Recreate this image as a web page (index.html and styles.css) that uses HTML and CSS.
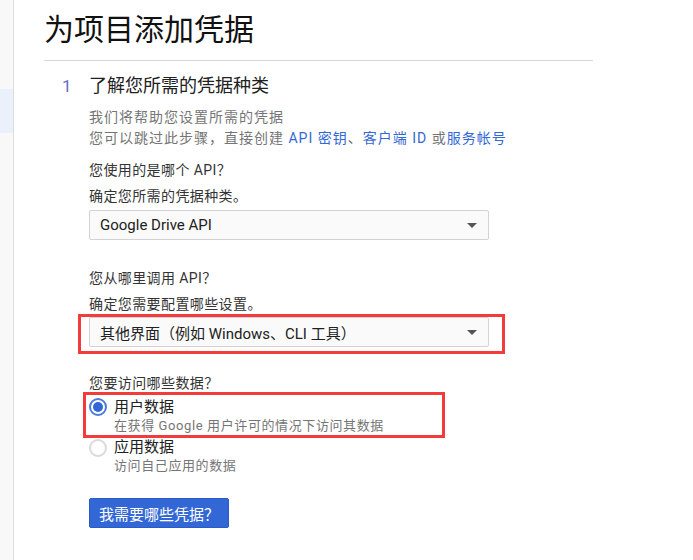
FILE: index.html
```html
<!DOCTYPE html>
<html lang="zh-CN">
<head>
<meta charset="utf-8">
<link rel="stylesheet" href="styles.css">
</head>
<body>
<div class="page">
  <aside class="sidebar">
    <div class="side-item active"></div>
  </aside>
  <main class="main">
    <h1 class="title">为项目添加凭据</h1>
    <div class="step">
      <div class="step-head">
        <span class="step-num">1</span>
        <span class="step-title">了解您所需的凭据种类</span>
      </div>
      <div class="step-body">
        <p class="intro">我们将帮助您设置所需的凭据<br>您可以跳过此步骤，直接创建 <a class="link">API 密钥</a>、<a class="link">客户端 ID</a> 或<a class="link">服务帐号</a></p>

        <div class="field first">
          <div class="q">您使用的是哪个 API？</div>
          <div class="hint">确定您所需的凭据种类。</div>
          <div class="select"><span>Google Drive API</span><span class="caret"></span></div>
        </div>

        <div class="field second">
          <div class="q">您从哪里调用 API？</div>
          <div class="hint">确定您需要配置哪些设置。</div>
          <div class="mark mark-select">
            <div class="select"><span>其他界面（例如 Windows、CLI 工具）</span><span class="caret"></span></div>
          </div>
        </div>

        <div class="field radios">
          <div class="q">您要访问哪些数据？</div>
          <div class="mark mark-radio">
            <div class="radio-row">
              <span class="radio checked"></span>
              <div>
                <div class="r-label">用户数据</div>
                <div class="r-desc">在获得 Google 用户许可的情况下访问其数据</div>
              </div>
            </div>
          </div>
          <div class="radio-row plain">
            <span class="radio"></span>
            <div>
              <div class="r-label">应用数据</div>
              <div class="r-desc">访问自己应用的数据</div>
            </div>
          </div>
        </div>

        <button class="btn">我需要哪些凭据？</button>
      </div>
    </div>
  </main>
</div>
</body>
</html>
```
FILE: styles.css
```css
* { box-sizing: border-box; }
html, body { margin: 0; padding: 0; background: #fff; }
body {
  font-family: "Roboto", "Noto Sans CJK SC", sans-serif;
  color: #212121;
  width: 693px;
  height: 560px;
  overflow: hidden;
}
.page { display: flex; height: 560px; }
.sidebar {
  width: 14px;
  flex: none;
  background: #f8f8f8;
  border-right: 1px solid #dcdcdc;
  padding-top: 89px;
}
.side-item.active { height: 44px; background: #ebf1fb; }
.main { flex: 1; padding-left: 30px; }
.title {
  margin: 0;
  width: 549px;
  padding-top: 12px;
  height: 61px;
  font-size: 30px;
  font-weight: 400;
  line-height: 36px;
  color: #111;
  border-bottom: 1px solid #d6d6d6;
}
.step { padding-left: 18px; padding-top: 12px; }
.step-head { display: flex; align-items: baseline; height: 26px; line-height: 26px; }
.step-num { width: 27px; font-size: 17px; color: #6b6bc8; }
.step-title { font-size: 18px; color: #212121; }
.step-body { padding-left: 27px; }
.intro {
  margin: 8px 0 0;
  font-size: 14px;
  letter-spacing: 1px;
  line-height: 21px;
  color: #757575;
}
.link { color: #3367d6; text-decoration: none; }
.q, .hint {
  font-size: 14px;
  letter-spacing: 0.4px;
  line-height: 26px;
  color: #333;
}
.field.first { margin-top: 8px; }
.field.second { margin-top: 25px; }
.select {
  margin-top: 1px;
  width: 400px;
  height: 30px;
  border: 1px solid #d3d3d3;
  border-radius: 2px;
  background: #fafafa;
  display: flex;
  align-items: center;
  justify-content: space-between;
  padding: 0 11px 0 10px;
  font-size: 15px;
  color: #212121;
}
.caret {
  width: 0; height: 0;
  border-left: 5px solid transparent;
  border-right: 5px solid transparent;
  border-top: 5px solid #555;
}
.mark-select {
  margin: -3px 0 0 -11px;
  width: 427px;
  border: 3px solid #f23b3b;
  padding: 0 0 4px 8px;
}
.mark-select .select { margin-top: 0; }
.field.radios { margin-top: 16px; }
.mark-radio {
  margin: -4px 0 0 -6px;
  width: 362px;
  height: 46px;
  border: 3px solid #f23b3b;
  padding: 2px 0 0 3px;
}
.radio-row { display: flex; align-items: flex-start; gap: 7px; }
.radio {
  width: 18px; height: 18px;
  border-radius: 50%;
  border: 2px solid #dadada;
  background: #fff;
  margin-top: 1px;
  flex: none;
  position: relative;
}
.radio.checked { border-color: #4d7bdc; }
.radio.checked::after {
  content: "";
  position: absolute;
  left: 2px; top: 2px;
  width: 10px; height: 10px;
  border-radius: 50%;
  background: #3367d6;
}
.r-label { font-size: 15px; line-height: 20px; color: #212121; }
.r-desc { font-size: 13px; letter-spacing: 0.6px; line-height: 18px; color: #757575; }
.radio-row.plain { margin-top: -1px; }
.radio-row.plain .radio { margin-top: 2px; }
.btn {
  display: block;
  margin-top: 23px;
  width: 140px;
  height: 30px;
  background: #3367d6;
  color: #fff;
  border: 1px solid #2a5bc8;
  border-radius: 2px;
  font-family: inherit;
  font-size: 15px;
  padding: 0;
}
```
